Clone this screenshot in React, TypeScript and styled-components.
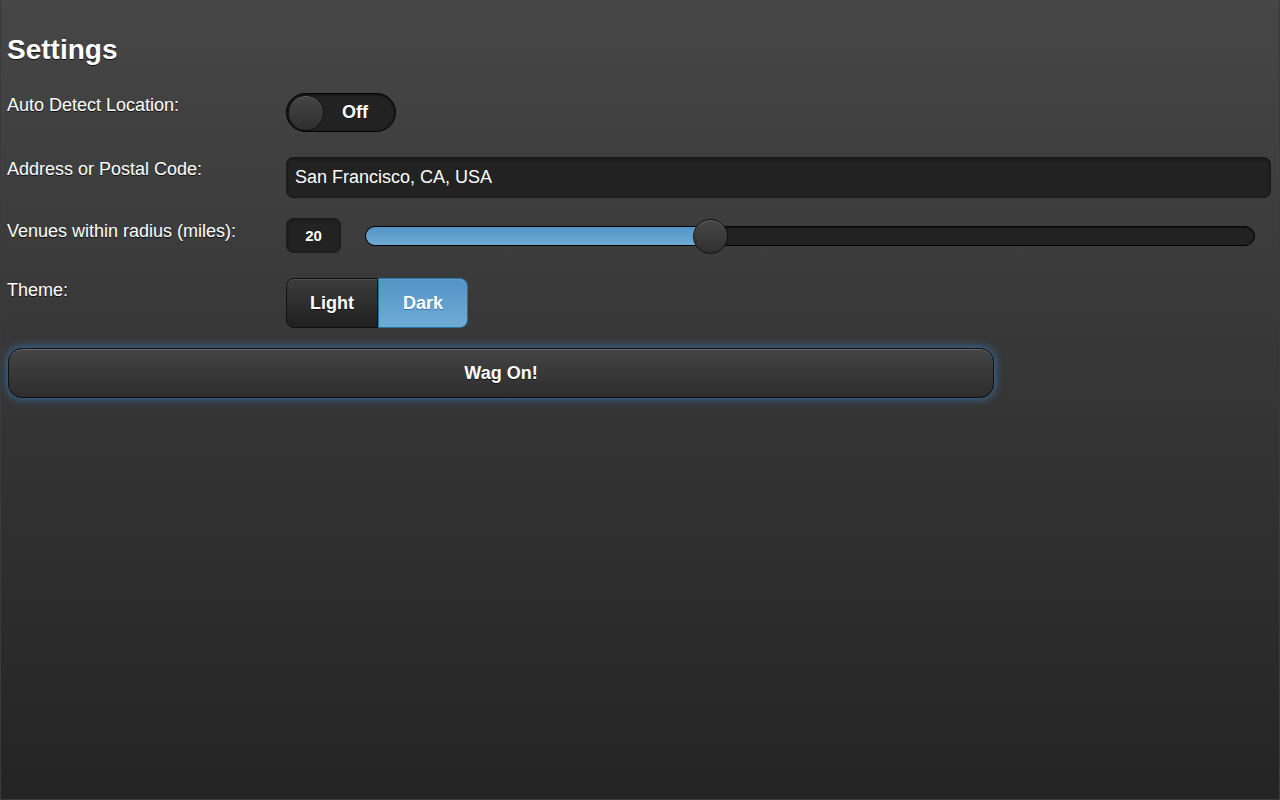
import React, { useState } from "react";
import styled, { createGlobalStyle } from "styled-components";

const GlobalStyle = createGlobalStyle`
  html, body {
    margin: 0;
    padding: 0;
    background: #252525;
  }
  body {
    font-family: "Liberation Sans", Arial, Helvetica, sans-serif;
    color: #fff;
  }
`;

const Page = styled.div`
  box-sizing: border-box;
  min-height: 100vh;
  padding: 34px 8px 20px 6px;
  background: linear-gradient(#464646, #242424);
  border: 1px solid #3a3a3a;
  border-top-color: #464646;
`;

const Title = styled.h2`
  margin: 0 0 28px;
  font-size: 28px;
  font-weight: bold;
  line-height: 30px;
  text-shadow: 0 1px 0 #111;
`;

const Row = styled.div<{ $gap: number }>`
  display: flex;
  align-items: flex-start;
  margin-bottom: ${(p) => p.$gap}px;
`;

const Label = styled.label<{ $offset: number }>`
  flex: 0 0 279px;
  font-size: 18px;
  line-height: 22px;
  padding-top: ${(p) => p.$offset}px;
  text-shadow: 0 1px 0 #111;
`;

const Field = styled.div`
  flex: 1;
  display: flex;
  align-items: center;
`;

const Flip = styled.button<{ $on: boolean }>`
  position: relative;
  width: 110px;
  height: 39px;
  border: 1px solid #000;
  border-radius: 20px;
  background: #222;
  box-shadow: inset 0 1px 3px rgba(0, 0, 0, 0.6);
  color: #fff;
  font-family: inherit;
  font-size: 18px;
  font-weight: bold;
  text-shadow: 0 1px 0 #111;
  cursor: pointer;
  display: flex;
  align-items: center;
  justify-content: ${(p) => (p.$on ? "flex-start" : "flex-end")};
  padding: 0 27px;
`;

const Knob = styled.span<{ $on: boolean }>`
  position: absolute;
  top: 1px;
  left: ${(p) => (p.$on ? "74px" : "1px")};
  width: 34px;
  height: 34px;
  border-radius: 50%;
  border: 1px solid #111;
  background: linear-gradient(#454545, #2e2e2e);
  box-shadow: inset 0 1px 0 rgba(255, 255, 255, 0.15);
`;

const TextInput = styled.input`
  box-sizing: border-box;
  width: 100%;
  height: 41px;
  margin-right: -1px;
  padding: 0 8px;
  background: #222;
  border: 1px solid #1a1a1a;
  border-radius: 7px;
  box-shadow: inset 0 1px 3px rgba(0, 0, 0, 0.4);
  color: #fff;
  font-family: inherit;
  font-size: 18px;
  outline: none;
`;

const NumberBox = styled.div`
  box-sizing: border-box;
  width: 55px;
  height: 35px;
  border-radius: 7px;
  background: #222;
  border: 1px solid #1d1d1d;
  box-shadow: inset 0 1px 3px rgba(0, 0, 0, 0.4);
  display: flex;
  align-items: center;
  justify-content: center;
  font-size: 15px;
  font-weight: bold;
`;

const Track = styled.div`
  position: relative;
  flex: 1;
  height: 18px;
  margin: 0 16px 0 24px;
  border: 1px solid #000;
  border-radius: 10px;
  background: #222;
  box-shadow: inset 0 1px 2px rgba(0, 0, 0, 0.5);
`;

const Fill = styled.div`
  position: absolute;
  left: 0;
  top: 0;
  bottom: 0;
  border-radius: 10px 0 0 10px;
  background: linear-gradient(#5393c5, #6facd5);
`;

const Thumb = styled.div`
  position: absolute;
  top: 50%;
  width: 33px;
  height: 33px;
  margin: -17px 0 0 -17px;
  border-radius: 50%;
  border: 1px solid #111;
  background: linear-gradient(#474747, #2f2f2f);
  box-shadow: inset 0 1px 0 rgba(255, 255, 255, 0.15);
`;

const Segmented = styled.div`
  display: flex;
  height: 50px;
`;

const Segment = styled.button<{ $active: boolean; $first: boolean }>`
  box-sizing: border-box;
  height: 100%;
  padding: 0 ${(p) => (p.$first ? 23 : 24)}px;
  font-family: inherit;
  font-size: 18px;
  font-weight: bold;
  color: #fff;
  cursor: pointer;
  border: 1px solid ${(p) => (p.$active ? "#2373a5" : "#111")};
  border-radius: ${(p) => (p.$first ? "8px 0 0 8px" : "0 8px 8px 0")};
  background: ${(p) =>
    p.$active
      ? "linear-gradient(#5393c5, #6facd5)"
      : "linear-gradient(#3c3c3c, #1f1f1f)"};
  text-shadow: ${(p) => (p.$active ? "0 1px 0 #3373a5" : "0 1px 0 #111")};
  box-shadow: inset 0 1px 0 rgba(255, 255, 255, 0.1);
`;

const ActionButton = styled.button`
  box-sizing: border-box;
  display: block;
  width: 986px;
  height: 50px;
  margin: 20px 0 0 1px;
  border: 1px solid #111;
  border-radius: 14px;
  background: linear-gradient(#444, #2d2d2d);
  box-shadow: 0 0 10px #387bbe, inset 0 1px 0 rgba(255, 255, 255, 0.2);
  color: #fff;
  font-family: inherit;
  font-size: 18px;
  font-weight: bold;
  text-shadow: 0 1px 0 #111;
  cursor: pointer;
`;

const MIN = 1;
const MAX = 50;

export default function App() {
  const [auto, setAuto] = useState(false);
  const [theme, setTheme] = useState<"light" | "dark">("dark");
  const radius = 20;
  const pct = ((radius - MIN) / (MAX - MIN)) * 100;

  return (
    <Page>
      <GlobalStyle />
      <Title>Settings</Title>
      <Row $gap={25}>
        <Label $offset={1}>Auto Detect Location:</Label>
        <Field>
          <Flip $on={auto} onClick={() => setAuto(!auto)}>
            <Knob $on={auto} />
            {auto ? "On" : "Off"}
          </Flip>
        </Field>
      </Row>
      <Row $gap={20}>
        <Label $offset={1}>Address or Postal Code:</Label>
        <Field>
          <TextInput defaultValue="San Francisco, CA, USA" />
        </Field>
      </Row>
      <Row $gap={25}>
        <Label $offset={2}>Venues within radius (miles):</Label>
        <Field>
          <NumberBox>{radius}</NumberBox>
          <Track>
            <Fill style={{ width: `${pct}%` }} />
            <Thumb style={{ left: `${pct}%` }} />
          </Track>
        </Field>
      </Row>
      <Row $gap={0}>
        <Label $offset={1}>Theme:</Label>
        <Field>
          <Segmented>
            <Segment
              $first
              $active={theme === "light"}
              onClick={() => setTheme("light")}
            >
              Light
            </Segment>
            <Segment
              $first={false}
              $active={theme === "dark"}
              onClick={() => setTheme("dark")}
            >
              Dark
            </Segment>
          </Segmented>
        </Field>
      </Row>
      <ActionButton>Wag On!</ActionButton>
    </Page>
  );
}
